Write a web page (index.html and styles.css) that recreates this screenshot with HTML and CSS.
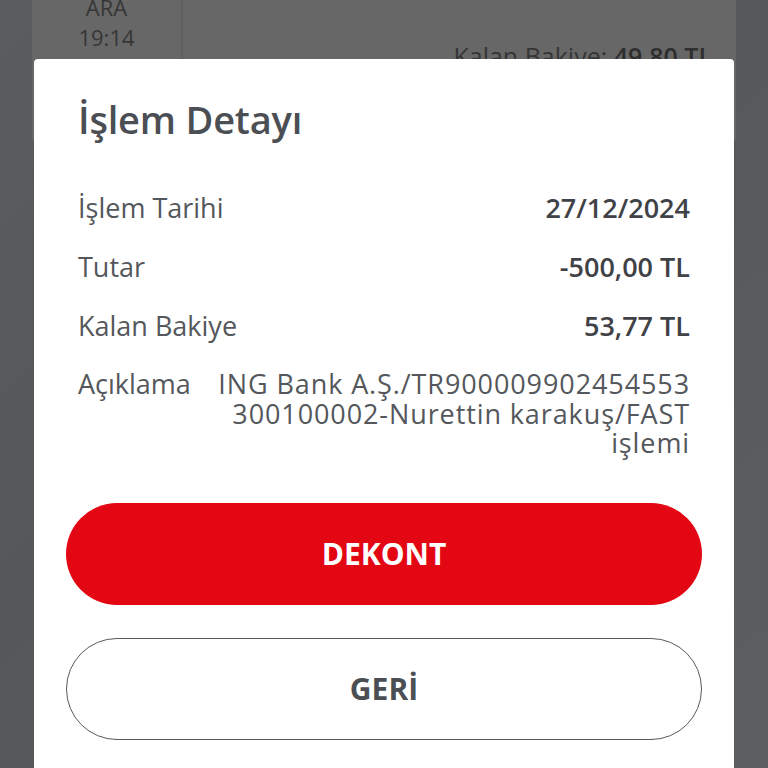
FILE: index.html
```html
<!DOCTYPE html>
<html lang="tr">
<head>
  <meta charset="UTF-8" />
  <meta name="viewport" content="width=device-width, initial-scale=1.0"/>
  <title>İşlem Detayı</title>
  <link rel="stylesheet" href="styles.css">
</head>
<body>
  <div class="screen">
    <!-- transaction list behind the dialog -->
    <div class="tx-card">
      <div class="tx-date">
        <span>ARA</span>
        <span>19:14</span>
      </div>
      <div class="tx-info">
        <p class="tx-balance">Kalan Bakiye: <b>49,80 TL</b></p>
      </div>
    </div>

    <!-- detail dialog -->
    <div class="dialog">
      <h2 class="dialog-title">İşlem Detayı</h2>
      <div class="detail-list">
        <div class="detail-row">
          <span class="label">İşlem Tarihi</span>
          <span class="value">27/12/2024</span>
        </div>
        <div class="detail-row">
          <span class="label">Tutar</span>
          <span class="value">-500,00 TL</span>
        </div>
        <div class="detail-row">
          <span class="label">Kalan Bakiye</span>
          <span class="value">53,77 TL</span>
        </div>
        <div class="detail-row desc">
          <span class="label">Açıklama</span>
          <span class="desc-text">ING Bank A.Ş./TR900009902454553<br>300100002-Nurettin karakuş/FAST<br>işlemi</span>
        </div>
      </div>
      <button class="btn btn-primary">DEKONT</button>
      <button class="btn btn-outline">GERİ</button>
    </div>
  </div>
</body>
</html>
```

FILE: styles.css
```css
* {
  box-sizing: border-box;
}

body {
  margin: 0;
  font-family: "Open Sans", Lato, sans-serif;
  background-color: #5b5c5e;
}

.screen {
  position: relative;
  width: 768px;
  height: 768px;
  overflow: hidden;
  background: linear-gradient(135deg, #5b5c5e 0%, #56575a 40%, #5d5e60 100%);
}

.tx-card {
  display: flex;
  margin: 0 32px;
  height: 140px;
  background-color: #676767;
}

.tx-date {
  width: 151px;
  display: flex;
  flex-direction: column;
  align-items: center;
  margin-top: -8px;
  font-size: 22px;
  line-height: 30px;
  color: #363636;
  border-right: 2px solid #5f5f5f;
}

.tx-info {
  flex: 1;
  display: flex;
  justify-content: flex-end;
  padding-right: 24px;
}

.tx-balance {
  margin: 39px 0 0;
  font-size: 25px;
  color: #363636;
}

.tx-balance b {
  font-weight: 600;
  color: #2e2e2e;
}

.dialog {
  position: absolute;
  top: 59px;
  left: 34px;
  width: 700px;
  height: 740px;
  padding: 0 32px;
  background-color: #ffffff;
  border-radius: 4px;
  display: flex;
  flex-direction: column;
}

.dialog-title {
  margin: 38px 12px 0;
  font-size: 38px;
  line-height: 44px;
  font-weight: 600;
  color: #4b4f54;
  letter-spacing: -0.2px;
}

.detail-list {
  margin: 37px 12px 0;
}

.detail-row {
  display: flex;
  justify-content: space-between;
  align-items: center;
  height: 59px;
  font-size: 27px;
  line-height: 30px;
}

.label {
  color: #54575b;
}

.value {
  font-weight: 600;
  color: #3f4246;
}

.detail-row.desc {
  height: auto;
  align-items: flex-start;
  padding-top: 14px;
}

.desc-text {
  text-align: right;
  color: #54575b;
  line-height: 29.5px;
  letter-spacing: 0.9px;
}

.btn {
  height: 102px;
  border-radius: 51px;
  font-family: inherit;
  font-size: 30px;
  font-weight: 700;
  cursor: pointer;
}

.btn-primary {
  margin-top: 45px;
  border: none;
  background-color: #e30613;
  color: #ffffff;
}

.btn-outline {
  margin-top: 33px;
  border: 1.5px solid #55595c;
  background-color: #ffffff;
  color: #4b4f54;
}
```
